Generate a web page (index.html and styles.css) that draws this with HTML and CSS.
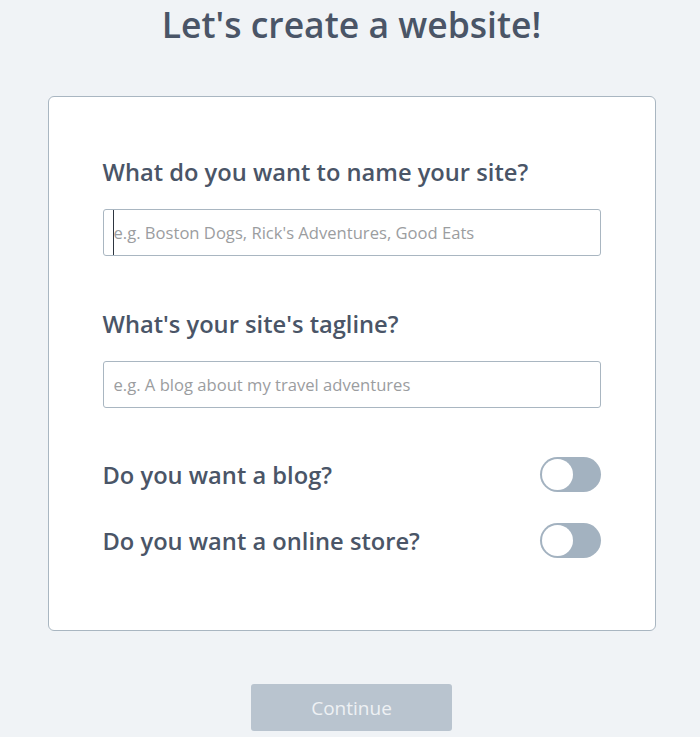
FILE: index.html
```html
<!DOCTYPE html>
<html lang="en">
<head>
    <meta charset="UTF-8">
    <meta name="viewport" content="width=device-width, initial-scale=1.0">
    <title>Create a website</title>
    <link rel="stylesheet" href="styles.css">
</head>
<body>
    <h1 class="title">Let's create a website!</h1>
    <form class="card" id="site-form">
        <div class="field">
            <label class="field-label" for="site-name">What do you want to name your site?</label>
            <div class="input-wrap focused">
                <input class="field-input" type="text" id="site-name" placeholder="e.g. Boston Dogs, Rick's Adventures, Good Eats">
            </div>
        </div>
        <div class="field">
            <label class="field-label" for="tagline">What's your site's tagline?</label>
            <div class="input-wrap">
                <input class="field-input" type="text" id="tagline" placeholder="e.g. A blog about my travel adventures">
            </div>
        </div>
        <div class="toggles">
            <label class="toggle-row">
                <span class="toggle-text">Do you want a blog?</span>
                <input class="toggle-input" type="checkbox" name="blog">
                <span class="toggle"></span>
            </label>
            <label class="toggle-row">
                <span class="toggle-text">Do you want a online store?</span>
                <input class="toggle-input" type="checkbox" name="store">
                <span class="toggle"></span>
            </label>
        </div>
    </form>
    <div class="actions">
        <button class="continue" type="button" disabled>Continue</button>
    </div>
</body>
</html>
```

FILE: styles.css
```css
body {
    font-family: "Open Sans", "Noto Sans", sans-serif;
    background-color: #f0f3f6;
    color: #4a5567;
    margin: 0;
    padding: 0 0 0 3px;
}
.title {
    font-size: 35.5px;
    font-weight: 600;
    line-height: 48px;
    margin: 0 0 48px;
    text-align: center;
}
.card {
    width: 608px;
    box-sizing: border-box;
    margin: 0 auto;
    padding: 60px 54px 72px;
    background-color: #fff;
    border: 1px solid #a9b6c1;
    border-radius: 6px;
}
.field {
    margin-bottom: 53px;
}
.field-label {
    display: block;
    font-size: 23.7px;
    font-weight: 600;
    line-height: 30px;
    margin-bottom: 22px;
}
.input-wrap {
    position: relative;
}
.input-wrap.focused::after {
    content: "";
    position: absolute;
    left: 10px;
    top: 1px;
    bottom: 1px;
    width: 1px;
    background-color: #2d3540;
}
.field-input {
    display: block;
    width: 100%;
    box-sizing: border-box;
    height: 47px;
    padding: 0 10px;
    font-family: inherit;
    font-size: 16.6px;
    color: #4a5567;
    border: 1px solid #a9b6c1;
    border-radius: 3px;
    outline: none;
}
.field-input::placeholder {
    color: #9b9d9f;
}
.toggles {
    display: flex;
    flex-direction: column;
    gap: 31px;
    margin-top: -4px;
}
.toggle-row {
    display: flex;
    align-items: center;
    justify-content: space-between;
    height: 35px;
    cursor: pointer;
}
.toggle-text {
    font-size: 23.7px;
    font-weight: 600;
}
.toggle-input {
    display: none;
}
.toggle {
    position: relative;
    width: 61px;
    height: 35px;
    border-radius: 18px;
    background-color: #a3b2c0;
}
.toggle::after {
    content: "";
    position: absolute;
    top: 2px;
    left: 2px;
    width: 31px;
    height: 31px;
    border-radius: 50%;
    background-color: #fff;
}
.toggle-input:checked + .toggle {
    background-color: #4a5567;
}
.toggle-input:checked + .toggle::after {
    left: 28px;
}
.actions {
    display: flex;
    justify-content: center;
    margin-top: 53px;
}
.continue {
    width: 201px;
    height: 47px;
    font-family: inherit;
    font-size: 19px;
    color: #eef1f4;
    background-color: #b9c4cf;
    border: none;
    border-radius: 3px;
}
```
